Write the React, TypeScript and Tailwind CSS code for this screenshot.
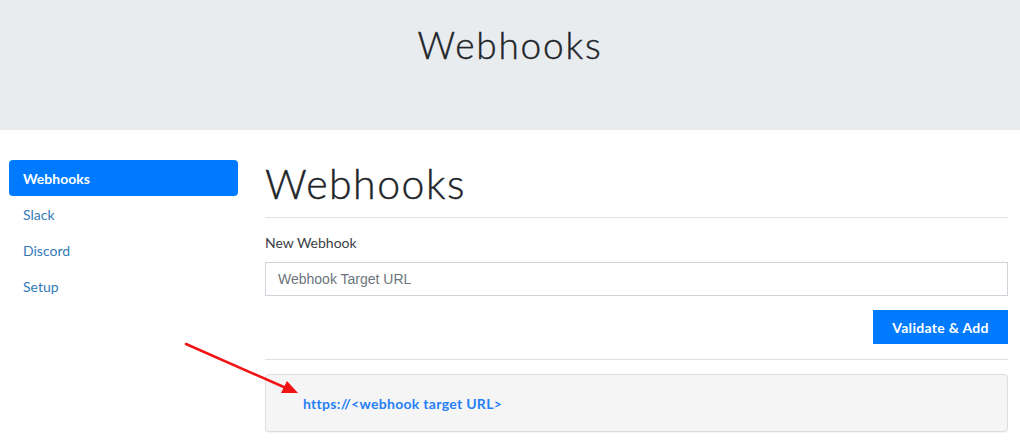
import React from "react";

const lato = { fontFamily: "Lato, 'Open Sans', sans-serif" };

function SideNav() {
  const items = ["Webhooks", "Slack", "Discord", "Setup"];
  return (
    <nav className="w-[229px] shrink-0 flex flex-col">
      {items.map((item, i) =>
        i === 0 ? (
          <a
            key={item}
            className="h-9 flex items-center px-[14px] rounded-[4px] bg-[#007bff] text-white text-[14px] font-bold"
          >
            {item}
          </a>
        ) : (
          <a key={item} className="h-9 flex items-center px-[14px] text-[14px] text-[#337ab7]">
            {item}
          </a>
        )
      )}
    </nav>
  );
}

export default function App() {
  return (
    <div className="relative w-[1020px] h-[441px] bg-white overflow-hidden text-[#212529]" style={lato}>
      <header className="h-[130px] bg-[#e9ecef] flex justify-center pt-[21px]">
        <h1 className="text-[37px] font-light tracking-[1.8px] leading-[48px] [-webkit-text-stroke:0.4px_#212529]">
          Webhooks
        </h1>
      </header>

      <div className="flex pt-[30px] pl-[9px] pr-[12px] gap-[27px]">
        <SideNav />

        <main className="flex-1">
          <h2 className="text-[41px] font-light tracking-[1.5px] leading-[48px] pb-[9px] border-b border-[#dee2e6] [-webkit-text-stroke:0.4px_#212529]">
            Webhooks
          </h2>

          <label className="block text-[14px] font-normal text-[#3a3f44] mt-[16px] mb-[10px] leading-[18px]">
            New Webhook
          </label>
          <input
            className="w-full h-[34px] border border-[#ced4da] px-[12px] text-[14px] text-[#495057] outline-none placeholder:text-[#6c757d]"
            style={{ fontFamily: "'Liberation Sans', Arial, sans-serif" }}
            placeholder="Webhook Target URL"
          />

          <div className="flex justify-end mt-[14px] pb-[15px] border-b border-[#dee2e6]">
            <button className="h-[34px] w-[135px] bg-[#007bff] text-white text-[14px] font-bold tracking-[0.3px]">
              Validate &amp; Add
            </button>
          </div>

          <div className="mt-[14px] h-[58px] bg-[#f5f5f5] border border-[#dddddd] rounded-[4px] flex items-center px-[37px] shadow-[0_1px_1px_rgba(0,0,0,0.05)]">
            <a className="text-[14px] font-bold text-[#2680f5] tracking-[0.3px]">https://&lt;webhook target URL&gt;</a>
          </div>
        </main>
      </div>

      <svg className="absolute left-0 top-0 pointer-events-none" width="1020" height="441">
        <line x1="186" y1="344" x2="286" y2="388" stroke="#f01414" strokeWidth="2.5" strokeLinecap="round" />
        <polygon points="298,393 281,393 287,381" fill="#f01414" />
      </svg>
    </div>
  );
}
